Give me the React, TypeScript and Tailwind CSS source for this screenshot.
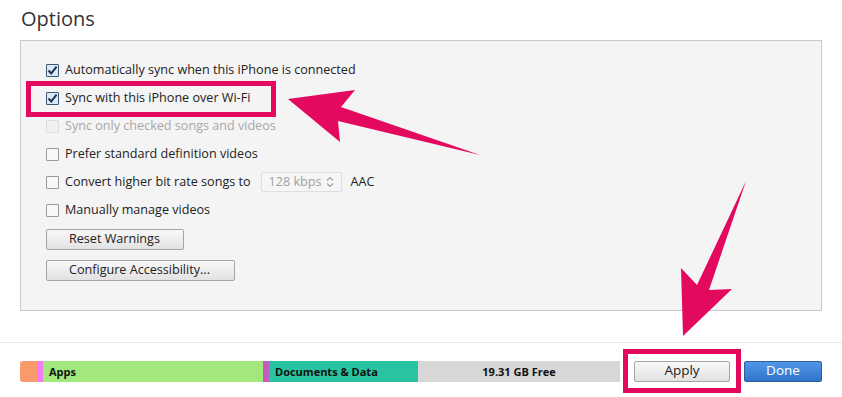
import React from "react";

function Check({ state }: { state: "on" | "off" | "disabled" }) {
  if (state === "on") {
    return (
      <div className="w-[13px] h-[13px] border border-[#3b5877] bg-[#dbe8f5] rounded-[1px] flex items-center justify-center shrink-0">
        <svg width="11" height="11" viewBox="0 0 11 11">
          <path d="M1.5 5.5 L4.2 8.4 L9.6 1.6" fill="none" stroke="#1c3554" strokeWidth="2" />
        </svg>
      </div>
    );
  }
  return (
    <div
      className={`w-[13px] h-[13px] border rounded-[1px] shrink-0 ${
        state === "disabled" ? "border-[#dcdcdc] bg-[#f0f0f0]" : "border-[#9a9a9a] bg-[#f8f8f8]"
      }`}
    />
  );
}

function Row({ state, children }: { state: "on" | "off" | "disabled"; children: React.ReactNode }) {
  return (
    <div className="h-[28px] flex items-center">
      <Check state={state} />
      <div className={`ml-[6px] flex items-center ${state === "disabled" ? "text-[#a8a8a8]" : "text-[#222]"}`}>
        {children}
      </div>
    </div>
  );
}

function GrayButton({ label, w }: { label: string; w: string }) {
  return (
    <button
      className={`${w} h-[21px] border border-[#a5a5a5] rounded-[2px] bg-gradient-to-b from-[#f8f8f8] to-[#e2e2e2] text-[12.6px] text-[#222] text-left pl-[22px] leading-none`}
    >
      {label}
    </button>
  );
}

export default function App() {
  return (
    <div
      className="relative w-[842px] h-[397px] bg-white overflow-hidden"
      style={{ fontFamily: "'Open Sans', 'Noto Sans', sans-serif" }}
    >
      <div className="pl-[21px] pt-[6px] h-[40px] text-[20px] text-[#333] leading-[26px]">Options</div>

      <div className="ml-[20px] w-[802px] h-[271px] border border-[#c9c9c9] bg-[#f4f4f4] pl-[25px] pt-[15px] text-[12.6px]">
        <Row state="on">Automatically sync when this iPhone is connected</Row>
        <Row state="on">Sync with this iPhone over Wi-Fi</Row>
        <Row state="disabled">Sync only checked songs and videos</Row>
        <Row state="off">Prefer standard definition videos</Row>
        <Row state="off">
          <span>Convert higher bit rate songs to</span>
          <div className="ml-[10px] w-[81px] h-[20px] border border-[#dedede] rounded-[2px] bg-[#f6f6f6] flex items-center justify-between px-[7px] text-[#a0a0a0]">
            <span>128 kbps</span>
            <svg width="8" height="12" viewBox="0 0 8 12">
              <path d="M1 4.5 L4 1.5 L7 4.5 M1 7.5 L4 10.5 L7 7.5" fill="none" stroke="#a0a0a0" strokeWidth="1.1" />
            </svg>
          </div>
          <span className="ml-[9px]">AAC</span>
        </Row>
        <Row state="off">Manually manage videos</Row>
        <div className="mt-[5px] flex flex-col gap-[10px]">
          <GrayButton label="Reset Warnings" w="w-[138px]" />
          <GrayButton label="Configure Accessibility..." w="w-[189px]" />
        </div>
      </div>

      <div className="mt-[31px] h-px bg-[#e6e6e6]" />

      <div className="mt-[6px] flex items-center">
        <div className="ml-[20px] w-[600px] h-[21px] flex text-[11px] font-bold text-[#111] leading-[21px]">
          <div className="w-[18px] bg-[#f89a6b] rounded-l-[3px]" />
          <div className="w-[5px] bg-[#f47bf2]" />
          <div className="w-[220px] bg-[#a2e87c] pl-[6px]">Apps</div>
          <div className="w-[6px] bg-[#c35bc0]" />
          <div className="w-[149px] bg-[#28c3a0] pl-[6px]">Documents &amp; Data</div>
          <div className="flex-1 bg-[#d7d7d7] text-center">19.31 GB Free</div>
        </div>
        <div className="ml-[3px] w-[118px] h-[44px] border-[5px] border-[#e2095e] flex items-center justify-center">
          <button className="w-[96px] h-[21px] border border-[#a5a5a5] rounded-[2px] bg-gradient-to-b from-[#f8f8f8] to-[#e2e2e2] text-[13.5px] text-[#222] leading-none">
            Apply
          </button>
        </div>
        <button className="ml-[3px] w-[78px] h-[21px] border border-[#2c5e9c] rounded-[2px] bg-gradient-to-b from-[#5197e6] to-[#2f74cc] text-[13.5px] text-white leading-none">
          Done
        </button>
      </div>

      {/* annotation overlay */}
      <div className="absolute left-[26px] top-[81px] w-[250px] h-[36px] border-[5px] border-[#e2095e]" />
      <svg className="absolute left-0 top-0 pointer-events-none" width="842" height="397">
        <polygon points="288,99 355,90 341,107 480,155 338,121 340,142" fill="#e2095e" />
        <polygon points="683,336 681,268 697,285 746,181 709,290 732,289" fill="#e2095e" />
      </svg>
    </div>
  );
}
